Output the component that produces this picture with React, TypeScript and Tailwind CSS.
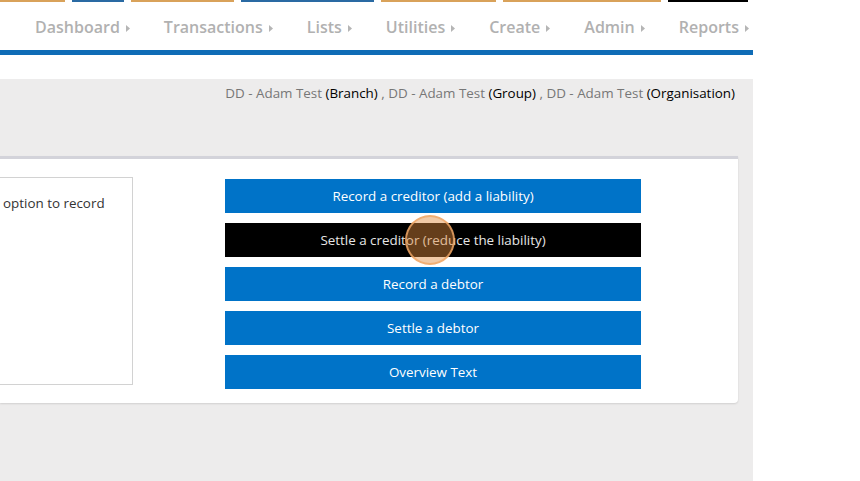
import React from 'react'

const segments = [
  { w: 'w-[65px]', c: 'bg-[#d9a25a]' },
  { w: 'w-[52px]', c: 'bg-[#2a6aa3]' },
  { w: 'w-[103px]', c: 'bg-[#d9a25a]' },
  { w: 'w-[133px]', c: 'bg-[#2a6aa3]' },
  { w: 'w-[115px]', c: 'bg-[#d9a25a]' },
  { w: 'w-[158px]', c: 'bg-[#d9a25a]' },
  { w: 'w-[80px]', c: 'bg-black' },
]

const navItems = ['Dashboard', 'Transactions', 'Lists', 'Utilities', 'Create', 'Admin', 'Reports']

const actions = [
  'Record a creditor (add a liability)',
  'Settle a creditor (reduce the liability)',
  'Record a debtor',
  'Settle a debtor',
  'Overview Text',
]

function Caret() {
  return (
    <svg width="4" height="7" viewBox="0 0 4 7" className="mt-[2px]">
      <path d="M0 0 L4 3.5 L0 7 Z" fill="#b5b5b5" />
    </svg>
  )
}

export default function App() {
  return (
    <div className="w-[860px] h-[481px] bg-white overflow-hidden font-['Open_Sans',sans-serif]">
      <div className="w-[753px] h-full flex flex-col overflow-hidden">
        <div className="flex h-[2px] gap-[7px]">
          {segments.map((s, i) => (
            <div key={i} className={`${s.w} ${s.c} h-full shrink-0`} />
          ))}
        </div>

        <nav className="h-[48px] flex items-center pl-[35px] pt-[2px] gap-[34px] whitespace-nowrap">
          {navItems.map((item) => (
            <div key={item} className="flex items-center gap-[6px] text-[16px] font-semibold text-[#b1b1b1]">
              <span>{item}</span>
              <Caret />
            </div>
          ))}
        </nav>

        <div className="h-[5px] bg-[#0f6cb6]" />
        <div className="h-[24px] bg-white" />

        <main className="flex-1 bg-[#edecec] pt-[4px] flex flex-col">
          <div className="text-right pr-[18px] text-[13.4px] leading-[20px] text-[#777777] whitespace-nowrap">
            DD - Adam Test <span className="text-black">(Branch)</span> , DD - Adam Test{' '}
            <span className="text-black">(Group)</span> , DD - Adam Test{' '}
            <span className="text-black">(Organisation)</span>
          </div>

          <section className="mt-[53px] w-[738px] bg-white border-t-[3px] border-[#d3d3da] rounded-br-[4px] shadow-[0_1px_2px_rgba(0,0,0,0.12)] flex pt-[18px] pb-[14px]">
            <div className="shrink-0 w-[133px] h-[208px] border border-l-0 border-[#d2d2d2]">
              <p className="pl-[3px] pt-[15px] text-[13.4px] leading-[20px] text-[#333333] whitespace-nowrap">
                option to record
              </p>
            </div>

            <div className="ml-[92px] w-[416px] flex flex-col gap-[10px] pt-[2px]">
              {actions.map((a, i) => (
                <div
                  key={a}
                  className={`relative h-[34px] flex items-center justify-center text-[13.4px] ${
                    i === 1 ? 'bg-black text-[#e6e6e6]' : 'bg-[#0073c8] text-white'
                  }`}
                >
                  {a}
                  {i === 1 && (
                    <span className="absolute left-[180px] top-[-8px] w-[50px] h-[50px] rounded-full bg-[#e08a3c]/45 border-2 border-[#f0a868]/80" />
                  )}
                </div>
              ))}
            </div>
          </section>
        </main>
      </div>
    </div>
  )
}
